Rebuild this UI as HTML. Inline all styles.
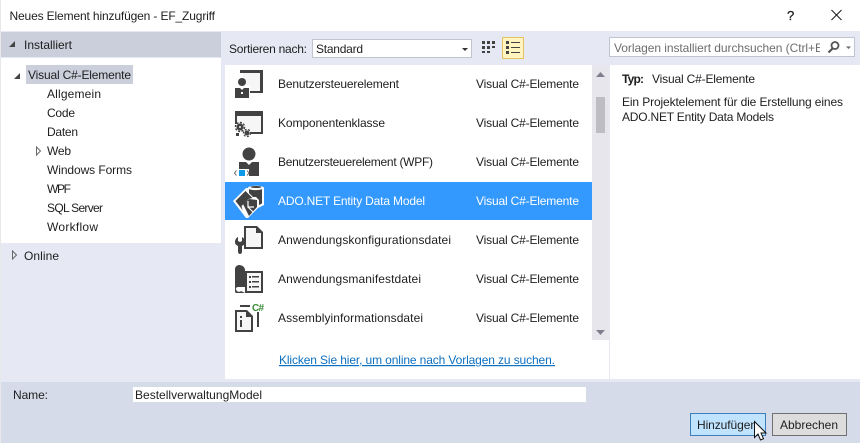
<!DOCTYPE html>
<html lang="de"><head><meta charset="utf-8"><title>Neues Element hinzufügen</title>
<style>
html,body{margin:0;padding:0;width:860px;height:443px;overflow:hidden;background:#fff}
svg{display:block}
text{font-family:"Liberation Sans",sans-serif;font-size:12px;fill:#1e1e1e}
</style></head><body>
<svg width="860" height="443" viewBox="0 0 860 443" xmlns="http://www.w3.org/2000/svg">
<!-- backgrounds -->
<rect width="860" height="443" fill="#fff"/>
<rect x="1" y="31" width="859" height="348" fill="#e6e9f4"/>
<rect x="1" y="32" width="220" height="25" fill="#cbcedb"/>
<rect x="1" y="58" width="220" height="185" fill="#fff"/>
<rect x="225" y="65" width="635" height="314" fill="#fff"/>
<rect x="609" y="65" width="1" height="314" fill="#e6e9f4"/>
<rect x="592" y="65" width="17" height="275" fill="#e6e6ec"/>
<rect x="596" y="97" width="9" height="36" fill="#bdbdc2"/>
<path d="M596 77l4.500-5 4.500 5z M596 330l9 0-4.500 5z" fill="#7d7f8c"/>
<rect x="1" y="379" width="859" height="3" fill="#e6e9f4"/>
<rect x="1" y="382" width="859" height="61" fill="#d6dbe9"/>
<rect x="0" y="0" width="1" height="443" fill="#e8e8e8"/>

<!-- title -->
<text x="9.500" y="20" textLength="205.500">Neues Element hinzufügen - EF_Zugriff</text>
<text x="787" y="20" style="font-size:13px;stroke:#1e1e1e;stroke-width:.3">?</text>
<path d="M831.500 10l10 10M841.500 10l-10 10" stroke="#222" stroke-width="1.100" fill="none"/>

<!-- tree -->
<path d="M9 47l6-6v6z" fill="#444"/>
<text x="24" y="49" textLength="48">Installiert</text>
<rect x="26" y="65" width="107" height="19" fill="#cbcedb"/>
<path d="M14 79l6-6v6z" fill="#444"/>
<text x="28" y="79" textLength="103">Visual C#-Elemente</text>
<text x="47" y="98" textLength="54">Allgemein</text>
<text x="47" y="117" textLength="28">Code</text>
<text x="47" y="136" textLength="31">Daten</text>
<path d="M36.500 147l4 4-4 4z" fill="#fff" stroke="#666"/>
<text x="47" y="155" textLength="24">Web</text>
<text x="47" y="174" textLength="85">Windows Forms</text>
<text x="47" y="193" textLength="24">WPF</text>
<text x="47" y="212" textLength="56">SQL Server</text>
<text x="47" y="231" textLength="51">Workflow</text>
<path d="M12.500 251l4 4-4 4z" fill="#e6e9f4" stroke="#666"/>
<text x="24" y="260" textLength="35">Online</text>

<!-- toolbar -->
<text x="229" y="53" textLength="78">Sortieren nach:</text>
<rect x="312.500" y="39.500" width="159" height="18" fill="#fff" stroke="#c0c4cf"/>
<text x="316" y="53" textLength="47">Standard</text>
<path d="M462 48h6l-3 3z" fill="#333"/>
<g fill="#424242">
<rect x="482" y="41" width="3" height="3"/><rect x="487" y="41" width="3" height="3"/><rect x="492" y="41" width="3" height="3"/>
<rect x="482" y="46" width="3" height="3"/><rect x="487" y="46" width="3" height="3"/><rect x="492" y="46" width="3" height="2"/>
<rect x="482" y="51" width="3" height="2"/><rect x="487" y="51" width="3" height="2"/>
</g>
<rect x="502.500" y="37.500" width="21" height="21" fill="#fdf4bf" stroke="#e5c365"/>
<g fill="#424242">
<rect x="506" y="41" width="3" height="3"/><rect x="506" y="46" width="3" height="3"/><rect x="506" y="51" width="3" height="3"/>
<rect x="511" y="42" width="9" height="1"/><rect x="511" y="47" width="9" height="1"/><rect x="511" y="52" width="9" height="1"/>
</g>
<!-- search -->
<rect x="609.500" y="37.500" width="245" height="19" fill="#fff" stroke="#c0c4cf"/>
<text x="614" y="52" textLength="209" style="fill:#6d6d6d">Vorlagen installiert durchsuchen (Ctrl+E</text>
<rect x="820" y="39" width="33" height="16" fill="#fff"/>
<circle cx="835" cy="45.500" r="3.500" fill="none" stroke="#555" stroke-width="1.800"/>
<path d="M832.500 48.500l-4 4" stroke="#555" stroke-width="2.200"/>
<path d="M846 46.500h5l-2.500 2.500z" fill="#666"/>

<!-- list icons -->
<g fill="#424242">
<!-- 1 -->
<path d="M240 70h23v23h-13v-2h10v-18h-20z"/>
<path d="M243 73h17v18h-10v-6h-7z" fill="#f6f6f6"/>
<circle cx="242" cy="82" r="4"/>
<path d="M235 88h5l2 2 2-2h5v10h-14z"/>
<rect x="241" y="92" width="2" height="2" fill="#fff"/>
<!-- 2 -->
<path d="M235 111h28v23h-13v-2h11v-16h-24v8h-2z"/>
<rect x="237" y="116" width="24" height="16" fill="#f6f6f6"/>
<circle cx="240" cy="127" r="3.500"/>
<circle cx="240" cy="127" r="4.500" fill="none" stroke="#424242" stroke-width="1.500" stroke-dasharray="2 1.500"/>
<circle cx="240" cy="127" r="1" fill="#f6f6f6"/>
<circle cx="247" cy="133" r="2.500"/>
<circle cx="247" cy="133" r="3.500" fill="none" stroke="#424242" stroke-width="1.300" stroke-dasharray="2 1.500"/>
<path d="M236 133h3v3h-3z"/>
<!-- 3 -->
<circle cx="249" cy="154" r="6.500"/>
<path d="M239 162h7l3 3 3-3h7v14h-20z"/>
<rect x="233" y="169" width="16" height="8" fill="#fff"/>
<rect x="239" y="170" width="6" height="6" fill="#0a9ae8"/>
<path d="M236.500 170.500l-2 2.500 2 2.500M247 170.500l2 2.500-2 2.500" fill="none" stroke="#666" stroke-width="1"/>
<!-- 5 -->
<path d="M244 226h13l6 6v17h-19z"/>
<path d="M246 228h10v5h5v14h-15z" fill="#f6f6f6"/>
<path d="M238 237v4l2 1 2-1v-4c2 1 3 3 3 5 0 2-1 3-3 4v6c0 1-1 2-2 2s-2-1-2-2v-6c-2-1-3-2-3-4 0-2 1-4 3-5z"/>
<!-- 6 -->
<path d="M239 265c3 0 6 2 6 5v17h-7c-2 0-3 2-1 4 1 1 3 1 4 0l4 2h-8c-2 0-2-1-2-3v-21c0-2 2-4 4-4z"/>
<path d="M245 271h18v22h-18z"/>
<rect x="247" y="273" width="14" height="18" fill="#f6f6f6"/>
<rect x="249" y="276" width="2" height="2"/><rect x="252" y="276" width="7" height="1.500"/>
<rect x="249" y="281" width="2" height="2"/><rect x="252" y="281" width="7" height="1.500"/>
<rect x="249" y="286" width="2" height="2"/><rect x="252" y="286" width="7" height="1.500"/>
<!-- 7 -->
<path d="M235 310h12l6 6v16h-18zM237 312v18h14v-13h-5v-5z"/>
<rect x="237" y="312" width="9" height="18" fill="#f6f6f6"/>
<rect x="246" y="317" width="5" height="13" fill="#f6f6f6"/>
<rect x="240" y="316" width="2" height="2"/><rect x="240" y="320" width="2" height="7"/>
<rect x="240" y="305" width="10" height="2"/>
<rect x="257" y="312" width="2" height="15"/>
</g>
<text x="252" y="311" textLength="12" style="font-size:10px;font-weight:bold;fill:#388a34">C#</text>

<!-- selected row -->
<rect x="225" y="182" width="367" height="38" fill="#3399ff"/>
<g>
<!-- white silhouette -->
<path d="M233 201l13-13h2c0-3 16-3 16 0v17l-6 3-10 10h-2z" fill="#fff"/>
<!-- cylinder -->
<path d="M249 189v4l4 4 3 0 3 3v5l3-1.500v-14.500c-2 1.500-11 1.500-13 0z" fill="#424242"/>
<ellipse cx="256" cy="187" rx="5.500" ry="1" fill="#424242"/>
<!-- large diamond -->
<path d="M235.500 201l10-10 7 7-4 1-7 7 1 4z" fill="#424242"/>
<!-- arrow block -->
<path d="M243 204l6-5 8 1 0 7-8 9z" fill="#424242"/>
<path d="M248 201v6h6M248 207l5 5" fill="none" stroke="#fff" stroke-width="1.200"/>
</g>

<!-- list text -->
<text x="278" y="88" textLength="121">Benutzersteuerelement</text>
<text x="476" y="88" textLength="103">Visual C#-Elemente</text>
<text x="278" y="127" textLength="107">Komponentenklasse</text>
<text x="476" y="127" textLength="103">Visual C#-Elemente</text>
<text x="278" y="166" textLength="155">Benutzersteuerelement (WPF)</text>
<text x="476" y="166" textLength="103">Visual C#-Elemente</text>
<text x="278" y="205" textLength="147" style="fill:#fff">ADO.NET Entity Data Model</text>
<text x="476" y="205" textLength="103" style="fill:#fff">Visual C#-Elemente</text>
<text x="278" y="244" textLength="173">Anwendungskonfigurationsdatei</text>
<text x="476" y="244" textLength="103">Visual C#-Elemente</text>
<text x="278" y="283" textLength="143">Anwendungsmanifestdatei</text>
<text x="476" y="283" textLength="103">Visual C#-Elemente</text>
<text x="278" y="322" textLength="145">Assemblyinformationsdatei</text>
<text x="476" y="322" textLength="103">Visual C#-Elemente</text>
<text x="279" y="364" textLength="276" style="fill:#0e70c0;text-decoration:underline">Klicken Sie hier, um online nach Vorlagen zu suchen.</text>

<!-- details -->
<text x="622" y="83" textLength="22" style="font-weight:bold">Typ:</text>
<text x="652" y="83" textLength="103">Visual C#-Elemente</text>
<text x="622" y="106" textLength="221">Ein Projektelement für die Erstellung eines</text>
<text x="622" y="121" textLength="152">ADO.NET Entity Data Models</text>

<!-- footer -->
<text x="13" y="399" textLength="35">Name:</text>
<rect x="133" y="387" width="453" height="15" fill="#fff"/>
<text x="135" y="399" textLength="127">BestellverwaltungModel</text>
<rect x="690.500" y="413.500" width="75" height="22" fill="#c0e4ff" stroke="#3d7fb8"/>
<text x="697" y="429" textLength="60">Hinzufügen</text>
<rect x="772.500" y="413.500" width="74" height="22" fill="#dddddd" stroke="#707070"/>
<text x="780" y="429" textLength="58">Abbrechen</text>
<!-- cursor -->
<path d="M754.500 421.500v16l3.500-3.500 2.500 6 3-1.300-2.500-5.700h5z" fill="#fff" stroke="#111" stroke-width="1"/>
</svg>
</body></html>
